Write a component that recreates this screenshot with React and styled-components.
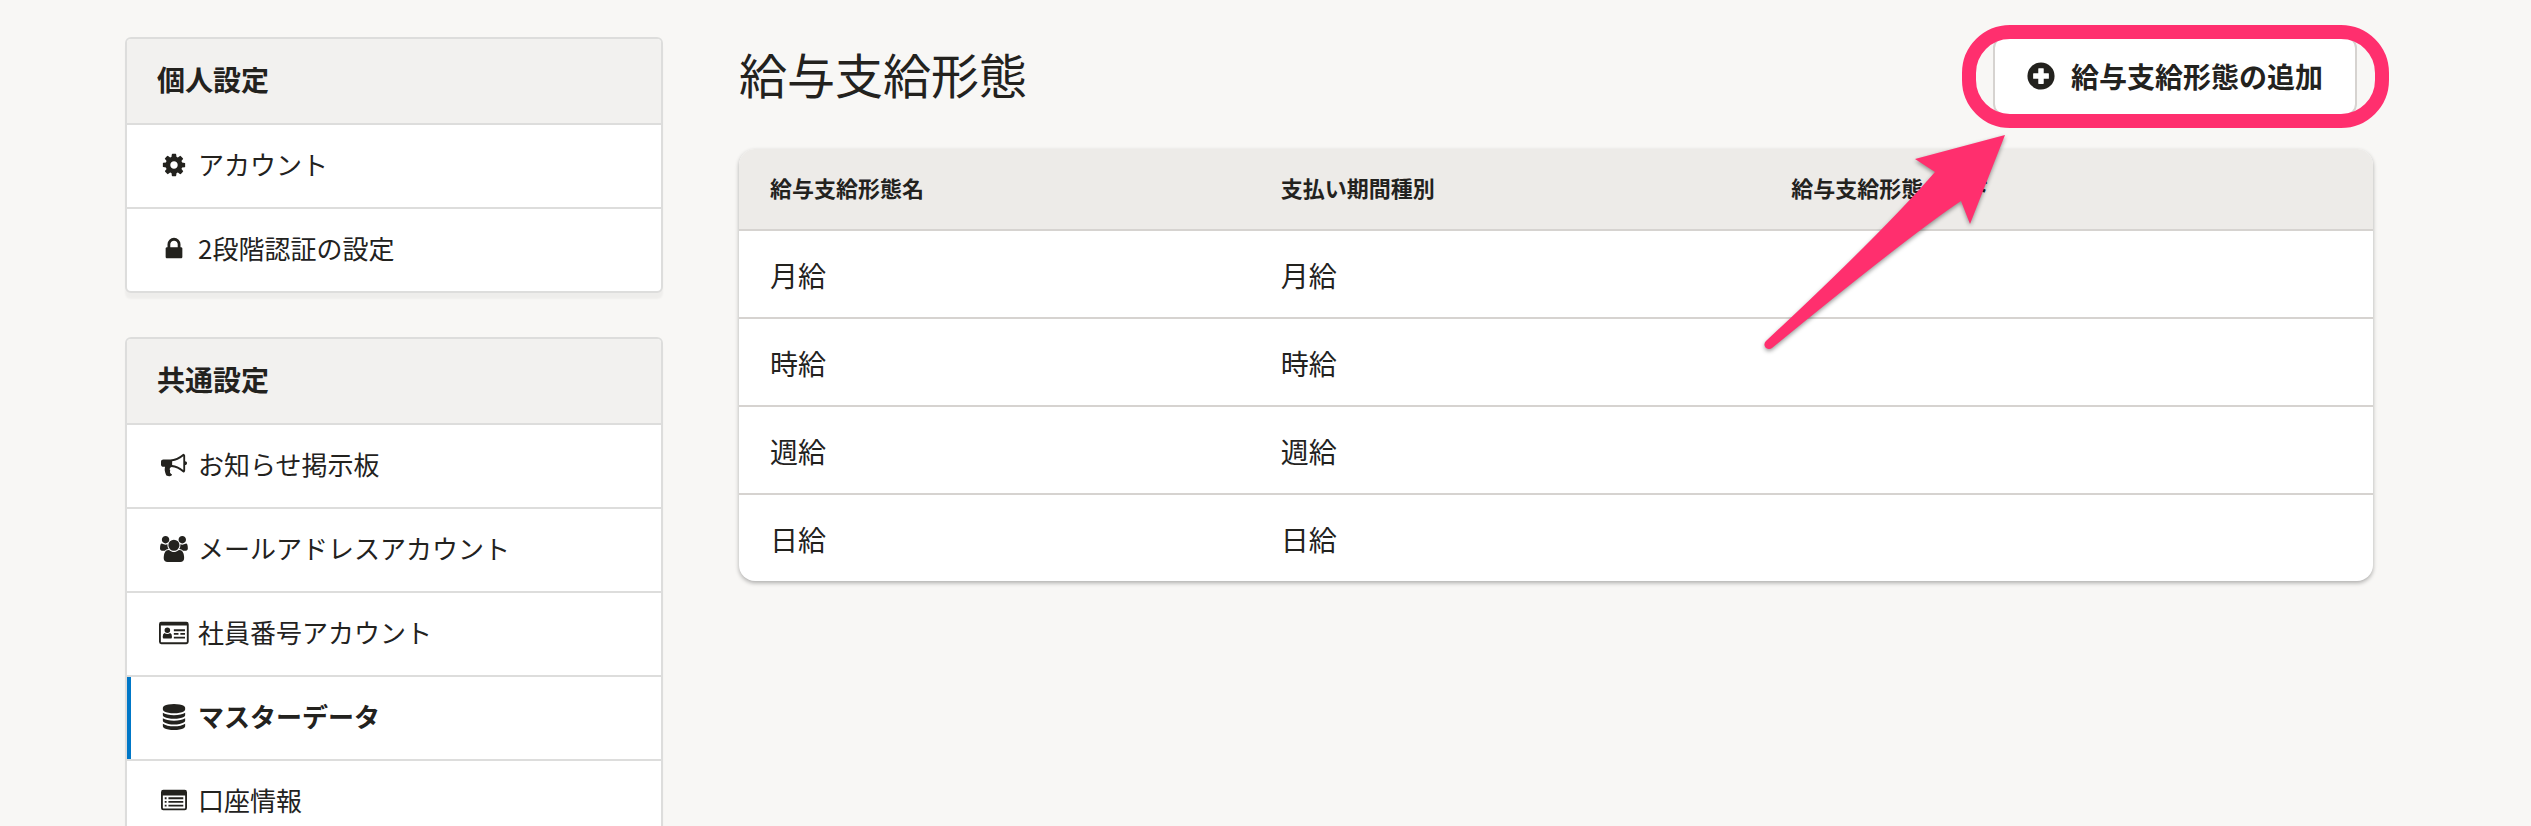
import React from "react";
import styled, { createGlobalStyle } from "styled-components";

const GlobalStyle = createGlobalStyle`
  *, *::before, *::after { box-sizing: border-box; }
  body {
    margin: 0;
    background: #f8f7f5;
    color: #23221e;
    font-family: "Noto Sans CJK JP", "Liberation Sans", sans-serif;
  }
`;

const Page = styled.div`
  display: flex;
  align-items: flex-start;
  gap: 76px;
  min-height: 100vh;
  padding: 36px 158px 0 125px;
`;

const Sidebar = styled.aside`
  display: flex;
  flex-direction: column;
  flex: 0 0 538px;
  gap: 44px;
  padding-top: 1px;
`;

const Group = styled.nav`
  border: 2px solid #dddddc;
  border-radius: 6px;
  background: #fff;
  box-shadow: 0 6px 2px rgba(0, 0, 0, 0.04);
  overflow: hidden;
`;

const GroupTitle = styled.h2`
  margin: 0;
  padding: 18px 30px 22px;
  background: #f2f1ef;
  font-size: 28px;
  line-height: 44px;
`;

const GroupList = styled.ul`
  margin: 0;
  padding: 0;
  list-style: none;
`;

const GroupItem = styled.li`
  border-top: 2px solid #dddddc;
`;

const GroupLink = styled.a`
  display: flex;
  align-items: center;
  gap: 7px;
  padding: 18px 30px 22px;
  box-shadow: ${(p) => (p.$active ? "inset 4px 0 0 #0077c7" : "none")};
  color: inherit;
  font-size: 26px;
  font-weight: ${(p) => (p.$active ? 700 : 400)};
  line-height: 42px;
  text-decoration: none;
`;

const IconSlot = styled.span`
  display: flex;
  justify-content: center;
  flex: 0 0 34px;
  padding-top: 2px;
`;

const Icon = styled.svg`
  display: block;
  height: ${(p) => p.$size || 26}px;
  fill: currentColor;
  overflow: visible;
`;

const Main = styled.main`
  flex: 1;
  min-width: 0;
`;

const Header = styled.header`
  display: flex;
  align-items: center;
  justify-content: space-between;
  margin-bottom: 33px;
  padding-right: 16px;
`;

const Title = styled.h1`
  margin: 0;
  padding-bottom: 6px;
  font-size: 48px;
  font-weight: 400;
  line-height: 72px;
`;

const Highlighted = styled.div`
  position: relative;
`;

const AddButton = styled.button`
  display: flex;
  align-items: center;
  gap: 16px;
  height: 80px;
  padding: 0 32px;
  border: 2px solid #d6d3d0;
  border-radius: 12px;
  background: #fff;
  color: inherit;
  font-family: inherit;
  font-size: 28px;
  font-weight: 700;
  line-height: 40px;
`;

const Ring = styled.div`
  position: absolute;
  inset: -11px -32px -12px -31px;
  border: 14px solid #ff2f6e;
  border-radius: 48px;
  pointer-events: none;
`;

const Arrow = styled.svg`
  position: absolute;
  top: 94px;
  left: -233px;
  width: 250px;
  height: 225px;
  fill: #ff2f6e;
  filter: drop-shadow(0 2px 2px rgba(0, 0, 0, 0.4));
  pointer-events: none;
`;

const TableCard = styled.div`
  border-radius: 16px;
  background: #fff;
  box-shadow: 0 2px 4px rgba(3, 3, 2, 0.3);
  overflow: hidden;
`;

const Table = styled.table`
  width: 100%;
  border-collapse: separate;
  border-spacing: 0;
  table-layout: fixed;
`;

const HeadCell = styled.th`
  width: ${(p) => p.$width || "auto"};
  padding: 18px 31px 22px;
  background: #edebe8;
  font-size: 22px;
  line-height: 40px;
  text-align: left;
`;

const Cell = styled.td`
  padding: 23px 31px 21px;
  border-top: 2px solid #d6d3d0;
  font-size: 28px;
  line-height: 42px;
`;

const GLYPHS = {
  cog: ["0 0 1792 1792", "M1152 896q0-106-75-181t-181-75-181 75-75 181 75 181 181 75 181-75 75-181zm512-109v222q0 12-8 23t-20 13l-185 28q-19 54-39 91 35 50 107 138 10 12 10 25t-9 23q-27 37-99 108t-94 71q-12 0-26-9l-138-108q-44 23-91 38-16 136-29 186-7 28-36 28h-222q-14 0-24.5-8.5t-11.5-21.5l-28-184q-49-16-90-37l-141 107q-10 9-25 9-14 0-25-11-126-114-165-168-7-10-7-23 0-12 8-23 15-21 51-66.5t54-70.5q-27-50-41-99l-183-27q-13-2-21-12.5t-8-23.5v-222q0-12 8-23t19-13l186-28q14-46 39-92-40-57-107-138-10-12-10-24 0-10 9-23 26-36 98.5-107.5t94.5-71.5q13 0 26 10l138 107q44-23 91-38 16-136 29-186 7-28 36-28h222q14 0 24.5 8.5t11.5 21.5l28 184q49 16 90 37l142-107q9-9 24-9 13 0 25 10 129 119 165 170 7 8 7 22 0 12-8 23-15 21-51 66.5t-54 70.5q26 50 41 98l183 28q13 2 21 12.5t8 23.5z"],
  lock: ["0 0 1792 1792", "M640 768h512v-192q0-106-75-181t-181-75-181 75-75 181v192zm832 96v576q0 40-28 68t-68 28h-960q-40 0-68-28t-28-68v-576q0-40 28-68t68-28h32v-192q0-184 132-316t316-132 316 132 132 316v192h32q40 0 68 28t28 68z"],
  bullhorn: ["0 0 1792 1792", "M1664 640q53 0 90.5 37.5t37.5 90.5-37.5 90.5-90.5 37.5v384q0 52-38 90t-90 38q-417-347-812-380-58 19-91 66t-31 100.5 40 92.5q-20 33-23 65.5t6 58 33.5 55 48 50 61.5 50.5q-29 58-111.5 83t-168.5 11.5-132-55.5q-7-23-29.5-87.5t-32-94.5-23-89-15-101 3.5-98.5 22-110.5h-122q-66 0-113-47t-47-113v-192q0-66 47-113t113-47h480q435 0 896-384 52 0 90 38t38 90v384zm-128 604v-954q-394 302-768 343v270q377 42 768 341z"],
  users: ["-64 0 1920 1792", "M529 896q-162 5-265 128h-134q-82 0-138-40.5t-56-118.5q0-353 124-353 6 0 43.5 21t97.5 42.5 119 21.5q67 0 133-23-5 37-5 66 0 139 81 256zm1071 637q0 120-73 189.5t-194 69.5h-874q-121 0-194-69.5t-73-189.5q0-53 3.5-103.5t14-109 26.5-108.5 43-97.5 62-81 85.5-53.5 111.5-20q10 0 43 21.5t73 48 107 48 135 21.5 135-21.5 107-48 73-48 43-21.5q61 0 111.5 20t85.5 53.5 62 81 43 97.5 26.5 108.5 14 109 3.5 103.5zm-1024-1277q0 106-75 181t-181 75-181-75-75-181 75-181 181-75 181 75 75 181zm704 384q0 159-112.5 271.5t-271.5 112.5-271.5-112.5-112.5-271.5 112.5-271.5 271.5-112.5 271.5 112.5 112.5 271.5zm576 225q0 78-56 118.5t-138 40.5h-134q-103-123-265-128 81-117 81-256 0-29-5-66 66 23 133 23 59 0 119-21.5t97.5-42.5 43.5-21q124 0 124 353zm-128-609q0 106-75 181t-181 75-181-75-75-181 75-181 181-75 181 75 75 181z"],
  database: ["0 0 1792 1792", "M896 768q237 0 443-43t325-127v170q0 69-103 128t-280 93.5-385 34.5-385-34.5-280-93.5-103-128v-170q119 84 325 127t443 43zm0 768q237 0 443-43t325-127v170q0 69-103 128t-280 93.5-385 34.5-385-34.5-280-93.5-103-128v-170q119 84 325 127t443 43zm0-384q237 0 443-43t325-127v170q0 69-103 128t-280 93.5-385 34.5-385-34.5-280-93.5-103-128v-170q119 84 325 127t443 43zm0-1152q208 0 385 34.5t280 93.5 103 128v128q0 69-103 128t-280 93.5-385 34.5-385-34.5-280-93.5-103-128v-128q0-69 103-128t280-93.5 385-34.5z"],
  idCard: ["0 0 2048 1792", "M160 128H1888a160 160 0 0 1 160 160V1504a160 160 0 0 1-160 160H160a160 160 0 0 1-160-160V288a160 160 0 0 1 160-160zM128 384V1504a32 32 0 0 0 32 32H1888a32 32 0 0 0 32-32V384zM896 1155q0 77-42 125H298q-42-48-42-125 0-220 128-259 80 64 192 64t192-64q128 39 128 259zM576 512a192 192 0 1 1 0 384 192 192 0 0 1 0-384zM1024 1152H1792V1280H1024zM1024 896H1344V1024H1024zM1472 896H1792V1024H1472zM1024 640H1792V768H1024z"],
  listAlt: ["0 0 1792 1792", "M160 128H1632a160 160 0 0 1 160 160V1376a160 160 0 0 1-160 160H160a160 160 0 0 1-160-160V288a160 160 0 0 1 160-160zM128 512V1376a32 32 0 0 0 32 32H1632a32 32 0 0 0 32-32V512zM256 640H384V768H256zM256 896H384V1024H256zM256 1152H384V1280H256zM512 640H1536V768H512zM512 896H1536V1024H512zM512 1152H1536V1280H512z"],
  plusCircle: ["0 0 512 512", "M256 8a248 248 0 1 0 0 496a248 248 0 1 0 0-496zM216 112H296a10 10 0 0 1 10 10V206H390a10 10 0 0 1 10 10V296a10 10 0 0 1-10 10H306V390a10 10 0 0 1-10 10H216a10 10 0 0 1-10-10V306H122a10 10 0 0 1-10-10V216a10 10 0 0 1 10-10H206V122a10 10 0 0 1 10-10z"],
};

function Glyph({ name, size }) {
  const [viewBox, d] = GLYPHS[name];
  return (
    <Icon viewBox={viewBox} $size={size} aria-hidden="true">
      <path d={d} fillRule="evenodd" />
    </Icon>
  );
}

const GROUPS = [
  {
    title: "個人設定",
    items: [
      { icon: "cog", label: "アカウント" },
      { icon: "lock", label: "2段階認証の設定" },
    ],
  },
  {
    title: "共通設定",
    items: [
      { icon: "bullhorn", label: "お知らせ掲示板" },
      { icon: "users", label: "メールアドレスアカウント" },
      { icon: "idCard", label: "社員番号アカウント" },
      { icon: "database", label: "マスターデータ", active: true },
      { icon: "listAlt", label: "口座情報" },
    ],
  },
];

const ROWS = ["月給", "時給", "週給", "日給"];

export default function App() {
  return (
    <>
      <GlobalStyle />
      <Page>
        <Sidebar>
          {GROUPS.map((group) => (
            <Group key={group.title} aria-label={group.title}>
              <GroupTitle>{group.title}</GroupTitle>
              <GroupList>
                {group.items.map((item) => (
                  <GroupItem key={item.label}>
                    <GroupLink href="#" $active={item.active} aria-current={item.active ? "page" : undefined}>
                      <IconSlot>
                        <Glyph name={item.icon} />
                      </IconSlot>
                      {item.label}
                    </GroupLink>
                  </GroupItem>
                ))}
              </GroupList>
            </Group>
          ))}
        </Sidebar>
        <Main>
          <Header>
            <Title>給与支給形態</Title>
            <Highlighted>
              <AddButton type="button">
                <Glyph name="plusCircle" size={28} />
                給与支給形態の追加
              </AddButton>
              <Ring />
              <Arrow viewBox="1760 130 250 225" aria-hidden="true">
                <path d="M2005 135L1915 159L1935 172Q1880 235 1766 341A4 4 0 0 0 1772 348Q1910 235 1961 201L1970 224Z" />
              </Arrow>
            </Highlighted>
          </Header>
          <TableCard>
            <Table>
              <thead>
                <tr>
                  <HeadCell $width="31.25%">給与支給形態名</HeadCell>
                  <HeadCell $width="31.25%">支払い期間種別</HeadCell>
                  <HeadCell>給与支給形態コード</HeadCell>
                </tr>
              </thead>
              <tbody>
                {ROWS.map((name) => (
                  <tr key={name}>
                    <Cell>{name}</Cell>
                    <Cell>{name}</Cell>
                    <Cell />
                  </tr>
                ))}
              </tbody>
            </Table>
          </TableCard>
        </Main>
      </Page>
    </>
  );
}
